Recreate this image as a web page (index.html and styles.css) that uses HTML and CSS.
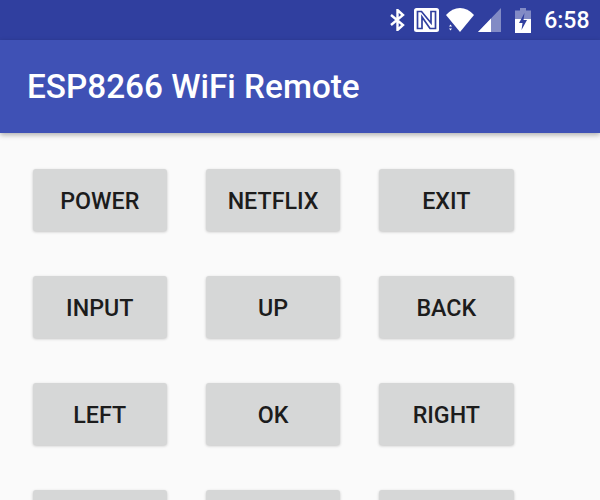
FILE: index.html
```html
<!DOCTYPE html>
<html>
<head>
    <title>ESP8266 WiFi Remote</title>
    <link rel="stylesheet" href="styles.css">
</head>
<body>
    <div class="app">
        <div class="status-bar">
            <svg class="icon bt" width="15" height="22" viewBox="0 0 15 22">
                <path d="M1 6 L13 16 L7.500 21 V1 L13 6 L1 16" fill="none" stroke="#fff" stroke-width="2.400"/>
            </svg>
            <svg class="icon nfc" width="25" height="24" viewBox="0 0 25 24">
                <rect width="25" height="24" rx="2.500" fill="#fff"/>
                <path d="M7.500 3.500 H3.500 V20.500 H8 V9 L16 20.500 H21.500 V3.500 H17 V15 Z" fill="none" stroke="#303f9f" stroke-width="1.700"/>
            </svg>
            <svg class="icon wifi" width="28" height="24" viewBox="0 0 28 24">
                <path d="M0 7 C8 -2.300 20 -2.300 28 7 L14 24 Z" fill="#fff"/>
                <path d="M1 16 H7 V24 H1 Z" fill="#303f9f"/>
                <path d="M3 18.500 L4.500 16.500 L6 18.500 Z M3 20.500 L4.500 22.500 L6 20.500 Z" fill="#fff"/>
            </svg>
            <svg class="icon signal" width="23" height="24" viewBox="0 0 23 24">
                <path d="M0 24 L23 0 V24 Z" fill="#fff" opacity="0.4"/>
                <path d="M0 24 L13 10.400 V24 Z" fill="#fff"/>
            </svg>
            <svg class="icon battery" width="16" height="25" viewBox="0 0 16 25">
                <path d="M5 0 H11 V2.500 H16 V25 H0 V2.500 H5 Z" fill="#fff" opacity="0.4"/>
                <path d="M0 11 H16 V25 H0 Z" fill="#fff"/>
                <path d="M9.500 5 L4 15 H7.500 L6.500 22 L12 12 H8.500 Z" fill="#303f9f"/>
            </svg>
            <span class="clock">6:58</span>
        </div>

        <div class="toolbar">
            <h1 class="title">ESP8266 WiFi Remote</h1>
        </div>

        <div class="remote">
            <button class="key">POWER</button>
            <button class="key">NETFLIX</button>
            <button class="key">EXIT</button>
            <button class="key">INPUT</button>
            <button class="key">UP</button>
            <button class="key">BACK</button>
            <button class="key">LEFT</button>
            <button class="key">OK</button>
            <button class="key">RIGHT</button>
            <button class="key"></button>
            <button class="key"></button>
            <button class="key"></button>
        </div>
    </div>
</body>
</html>
```

FILE: styles.css
```css
body {
    margin: 0;
    background: #fafafa;
    font-family: Roboto, "Liberation Sans", sans-serif;
}

.app {
    height: 500px;
    overflow: hidden;
}

.status-bar {
    height: 40px;
    background: #303f9f;
    display: flex;
    align-items: center;
    justify-content: flex-end;
    padding-right: 10.500px;
}

.icon {
    display: block;
    flex: none;
}

.bt {
    margin-right: 9px;
}

.nfc {
    margin-right: 7px;
}

.wifi {
    margin-right: 4px;
}

.signal {
    margin-right: 14px;
}

.battery {
    margin-right: 13px;
}

.clock {
    color: #fff;
    font-size: 23px;
    font-weight: 500;
}

.toolbar {
    height: 93px;
    background: #3f51b5;
    display: flex;
    align-items: center;
    padding-left: 27px;
    box-shadow: 0 2px 5px rgba(0, 0, 0, 0.3);
}

.title {
    margin: 0;
    color: #fff;
    font-size: 33.300px;
    font-weight: 500;
}

.remote {
    display: grid;
    grid-template-columns: repeat(3, 134.500px);
    grid-auto-rows: 62px;
    column-gap: 38.800px;
    row-gap: 45px;
    padding: 36px 32.500px;
}

.key {
    border: none;
    padding: 2px 0 0;
    background: #d6d7d7;
    color: #1c1c1c;
    border-radius: 3px;
    font-family: inherit;
    font-size: 23.250px;
    font-weight: 500;
    box-shadow: 0 1px 3px rgba(0, 0, 0, 0.22);
}
```
